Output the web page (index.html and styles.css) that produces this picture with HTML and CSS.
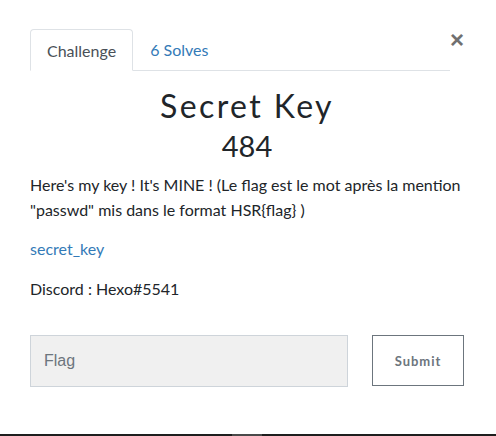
FILE: index.html
```html
<!DOCTYPE html>
<html>
<head>
<meta charset="utf-8">
<link rel="stylesheet" href="styles.css">
</head>
<body>
<div class="modal">
  <div class="head">
    <ul class="tabs">
      <li class="tab active">Challenge</li>
      <li class="tab link">6 Solves</li>
    </ul>
    <span class="close">&times;</span>
  </div>
  <h2 class="title">Secret Key</h2>
  <h3 class="points">484</h3>
  <p class="desc">Here's my key ! It's MINE ! (Le flag est le mot après la mention "passwd" mis dans le format HSR{flag} )</p>
  <p class="file"><a href="#">secret_key</a></p>
  <p class="discord">Discord : Hexo#5541</p>
  <div class="form">
    <input class="flag" type="text" placeholder="Flag">
    <button class="submit">Submit</button>
  </div>
</div>
<div class="bottom"><span class="thumb"></span></div>
</body>
</html>
```
FILE: styles.css
```css
html, body {
  margin: 0;
  padding: 0;
  background: #fff;
  width: 496px;
  height: 436px;
  overflow: hidden;
}
body {
  font-family: Lato, "Liberation Sans", sans-serif;
  color: #212529;
  position: relative;
}
.modal {
  padding: 29px 32px 0 30px;
  height: 405px;
}
.head {
  display: flex;
  align-items: flex-start;
}
.tabs {
  list-style: none;
  margin: 0;
  padding: 0;
  display: flex;
  width: 420px;
  border-bottom: 1px solid #dee2e6;
  height: 41px;
}
.tab {
  font-size: 16px;
  padding: 0 17px;
  line-height: 41px;
  height: 42px;
  box-sizing: border-box;
}
.tab.active {
  color: #495057;
  border: 1px solid #dee2e6;
  border-bottom-color: #fff;
  border-radius: 4px 4px 0 0;
  background: #fff;
  padding: 0 16px;
}
.tab.link {
  color: #337ab7;
}
.close {
  margin-left: auto;
  font-size: 24px;
  font-weight: 700;
  color: #707070;
  line-height: 20px;
  margin-top: 1px;
  font-family: "Liberation Sans", sans-serif;
}
.title {
  text-align: center;
  font-family: Lato, sans-serif;
  font-weight: 400;
  font-size: 32px;
  letter-spacing: 2.4px;
  margin: 17px 0 0;
  line-height: 36px;
  color: #212529;
}
.points {
  text-align: center;
  font-weight: 400;
  font-size: 29px;
  margin: 5px 0 0;
  line-height: 34px;
}
.desc {
  font-size: 16px;
  line-height: 25px;
  margin: 9px 0 0;
}
.file {
  font-size: 16px;
  margin: 14px 0 0;
  line-height: 25px;
}
.file a {
  color: #337ab7;
  text-decoration: none;
}
.discord {
  font-size: 16px;
  margin: 15px 0 0;
  line-height: 25px;
}
.form {
  display: flex;
  margin-top: 34px;
}
.flag {
  width: 318px;
  height: 52px;
  box-sizing: border-box;
  background: #f0f0f0;
  border: 1px solid #ced4da;
  padding: 0 13px;
  font-family: "Liberation Sans", sans-serif;
  font-size: 16px;
  outline: none;
}
.flag::placeholder {
  color: #6c757d;
}
.submit {
  margin-left: 24px;
  width: 92px;
  height: 51px;
  background: #fff;
  border: 1px solid #6c757d;
  color: #6c757d;
  font-family: Lato, sans-serif;
  font-weight: 700;
  font-size: 13px;
  letter-spacing: 1px;
}
.bottom {
  position: absolute;
  left: 0;
  right: 0;
  bottom: 0;
  height: 2px;
  background: #1e1e1e;
}
.thumb {
  position: absolute;
  left: 232px;
  width: 30px;
  height: 2px;
  background: #4a4a4a;
}
```
